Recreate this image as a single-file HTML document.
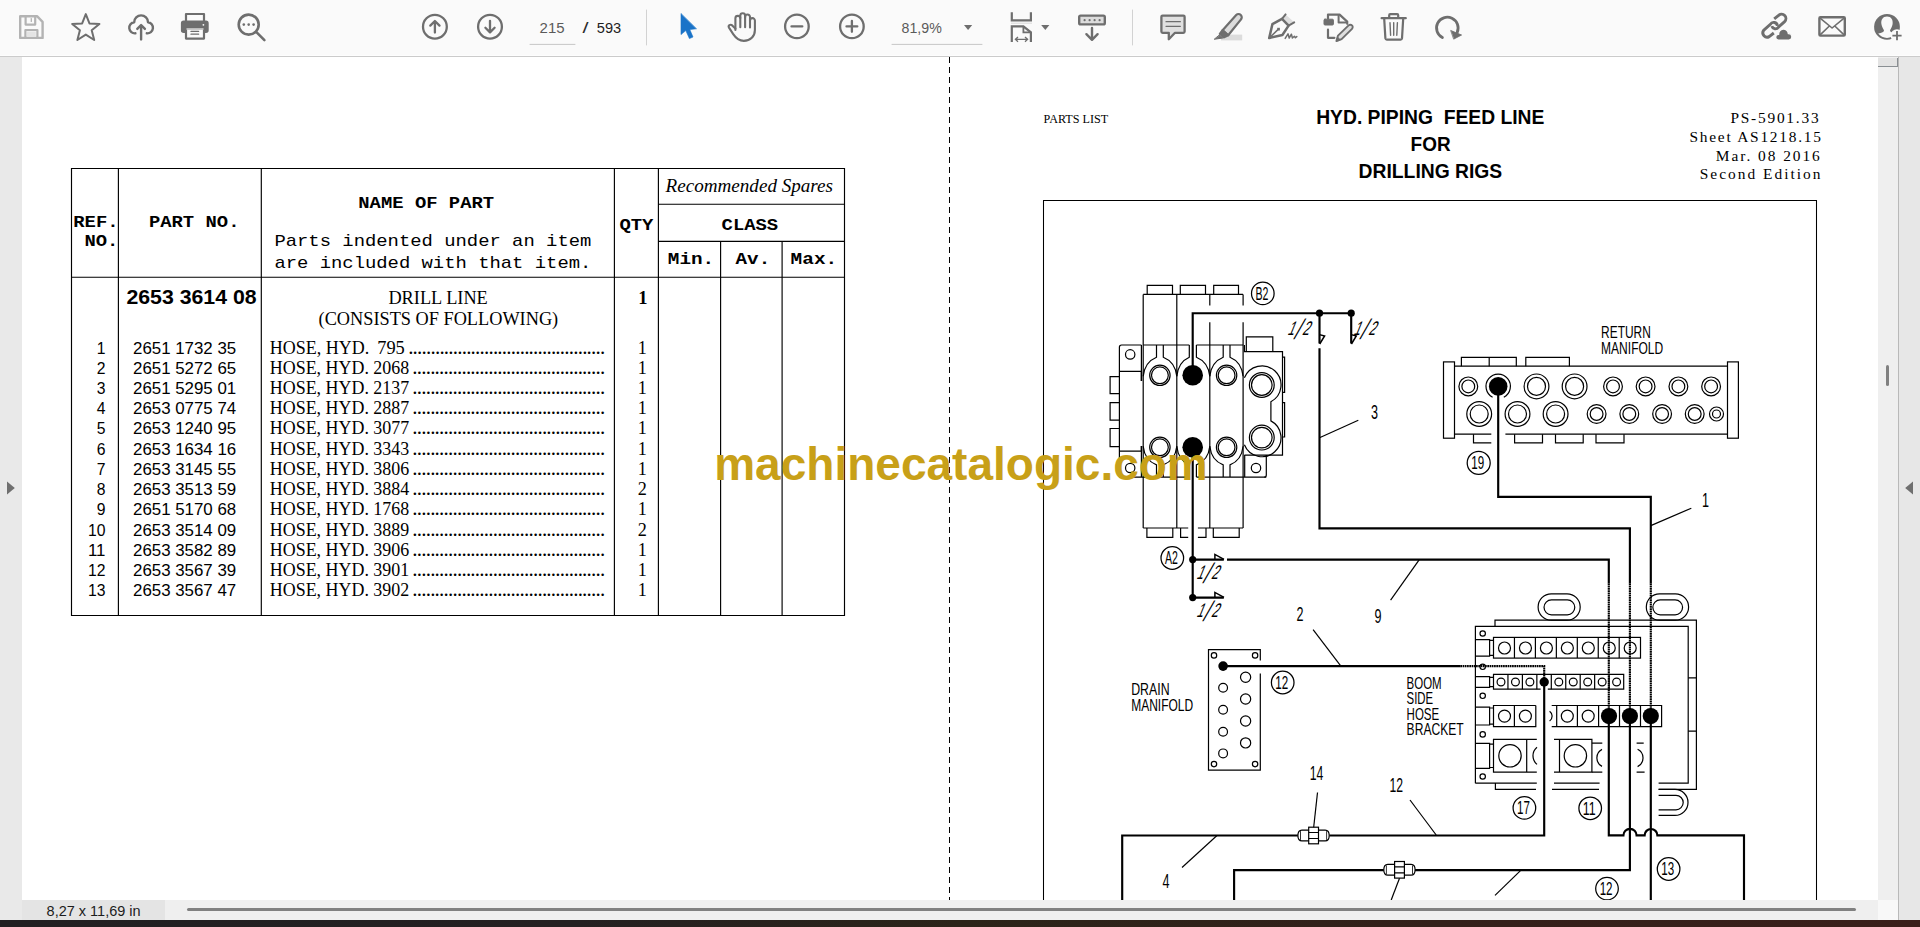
<!DOCTYPE html>
<html lang="en"><head><meta charset="utf-8">
<title>HYD. PIPING FEED LINE FOR DRILLING RIGS - Parts List</title>
<style>
html,body{margin:0;padding:0;}
body{width:1920px;height:927px;overflow:hidden;background:#fff;position:relative;
 font-family:"Liberation Sans",sans-serif;}
.abs{position:absolute;}
#toolbar{left:0;top:0;width:1920px;height:55px;background:#fafafa;border-bottom:1px solid #fdfdfd;}
#tbline{left:0;top:56px;width:1920px;height:1px;background:#cbcbcb;}
#leftstrip{left:0;top:57px;width:22px;height:863px;background:#e9e9e9;}
#page{left:22px;top:57px;width:1856px;height:843px;background:#fff;}
#vscroll{left:1878px;top:57px;width:20px;height:843px;background:#efefef;}
#vthumb{left:1878px;top:58px;width:19px;height:8px;background:#e3e3e3;border-bottom:1px solid #8a8f93;border-right:1px solid #8a8f93;}
#vmark{left:1886px;top:365px;width:3px;height:21px;background:#808080;border-radius:1.5px;}
#rline{left:1898px;top:57px;width:1px;height:863px;background:#b9b9b9;}
#rpanel{left:1899px;top:57px;width:21px;height:863px;background:#e7e7e7;}
#status{left:22px;top:900px;width:143px;height:20px;background:#e4e4e4;}
#hscroll{left:165px;top:900px;width:1713px;height:20px;background:#efefef;}
#hthumb{left:187px;top:908px;width:1669px;height:3px;background:#808080;border-radius:1.5px;}
#corner{left:1878px;top:900px;width:20px;height:20px;background:#f8f8f8;}
#taskbar{left:0;top:920px;width:1920px;height:7px;background:linear-gradient(90deg,#211f21 0%,#242021 30%,#2b2419 50%,#33201a 75%,#3a1f1a 100%);}
svg{position:absolute;left:0;top:0;overflow:visible;}
text{white-space:pre;}
</style></head><body>
<div class="abs" id="page"></div>
<svg id="doc" width="1920" height="927" viewBox="0 0 1920 927">
<g id="pages">
<g id="partslist" fill="#000" stroke="none">
<g stroke="#000" stroke-width="1.15" fill="none">
<path d="M71.5,168.5 H844.5 V615.5 H71.5 Z"/>
<path d="M118.4,168.5 V615.5 M261.3,168.5 V615.5 M614.4,168.5 V615.5 M658.4,168.5 V615.5"/>
<path d="M720.6,241.4 V615.5 M782.1,241.4 V615.5"/>
<path d="M71.5,277.2 H844.5 M658.4,204.2 H844.5 M658.4,241.4 H844.5"/>
</g>
<path d="M949.5,57 V900" stroke="#000" stroke-width="1" stroke-dasharray="6 4" fill="none"/>
<text x="73.30" y="226.90" font-family="'Liberation Mono',monospace" font-size="16.10" textLength="45.28" lengthAdjust="spacingAndGlyphs" font-weight="bold">REF.</text>
<text x="84.40" y="245.60" font-family="'Liberation Mono',monospace" font-size="16.10" textLength="33.96" lengthAdjust="spacingAndGlyphs" font-weight="bold">NO.</text>
<text x="148.90" y="226.90" font-family="'Liberation Mono',monospace" font-size="16.10" textLength="90.56" lengthAdjust="spacingAndGlyphs" font-weight="bold">PART NO.</text>
<text x="358.30" y="207.90" font-family="'Liberation Mono',monospace" font-size="16.10" textLength="135.84" lengthAdjust="spacingAndGlyphs" font-weight="bold">NAME OF PART</text>
<text x="274.40" y="246.30" font-family="'Liberation Mono',monospace" font-size="16.10" textLength="316.96" lengthAdjust="spacingAndGlyphs">Parts indented under an item</text>
<text x="274.40" y="268.30" font-family="'Liberation Mono',monospace" font-size="16.10" textLength="316.96" lengthAdjust="spacingAndGlyphs">are included with that item.</text>
<text x="619.40" y="229.80" font-family="'Liberation Mono',monospace" font-size="16.10" textLength="33.96" lengthAdjust="spacingAndGlyphs" font-weight="bold">QTY</text>
<text x="721.60" y="229.70" font-family="'Liberation Mono',monospace" font-size="16.10" textLength="56.60" lengthAdjust="spacingAndGlyphs" font-weight="bold">CLASS</text>
<text x="667.80" y="264.40" font-family="'Liberation Mono',monospace" font-size="16.10" textLength="46.40" lengthAdjust="spacingAndGlyphs" font-weight="bold">Min.</text>
<text x="735.60" y="264.40" font-family="'Liberation Mono',monospace" font-size="16.10" textLength="34.60" lengthAdjust="spacingAndGlyphs" font-weight="bold">Av.</text>
<text x="790.60" y="264.40" font-family="'Liberation Mono',monospace" font-size="16.10" textLength="46.60" lengthAdjust="spacingAndGlyphs" font-weight="bold">Max.</text>
<text x="665.60" y="191.90" font-family="'Liberation Serif',serif" font-size="19.00" textLength="167.40" lengthAdjust="spacingAndGlyphs" font-style="italic">Recommended Spares</text>
<text x="126.40" y="303.60" font-family="'Liberation Sans',sans-serif" font-size="20.90" textLength="130.20" lengthAdjust="spacingAndGlyphs" font-weight="bold">2653 3614 08</text>
<text x="388.40" y="303.50" font-family="'Liberation Serif',serif" font-size="18.20" textLength="99.40" lengthAdjust="spacingAndGlyphs">DRILL LINE</text>
<text x="318.60" y="324.50" font-family="'Liberation Serif',serif" font-size="18.20" textLength="239.60" lengthAdjust="spacingAndGlyphs">(CONSISTS OF FOLLOWING)</text>
<text x="638.20" y="303.50" font-family="'Liberation Serif',serif" font-size="18.60" textLength="9.30" lengthAdjust="spacingAndGlyphs" font-weight="bold">1</text>
<text x="105.40" y="353.60" font-family="'Liberation Sans',sans-serif" font-size="17.30" textLength="8.75" lengthAdjust="spacingAndGlyphs" text-anchor="end">1</text>
<text x="133.00" y="353.60" font-family="'Liberation Sans',sans-serif" font-size="17.30" textLength="103.20" lengthAdjust="spacingAndGlyphs">2651 1732 35</text>
<text x="269.80" y="353.60" font-family="'Liberation Serif',serif" font-size="18.20" textLength="99.40" lengthAdjust="spacingAndGlyphs">HOSE, HYD.</text>
<text x="377.20" y="353.60" font-family="'Liberation Serif',serif" font-size="18.20" textLength="27.60" lengthAdjust="spacingAndGlyphs">795</text>
<text x="408.15" y="353.60" font-family="'Liberation Serif',serif" font-size="21.00" textLength="197.08" lengthAdjust="spacing">............................................</text>
<text x="637.80" y="353.60" font-family="'Liberation Serif',serif" font-size="18.20" textLength="9.10" lengthAdjust="spacingAndGlyphs">1</text>
<text x="105.40" y="373.82" font-family="'Liberation Sans',sans-serif" font-size="17.30" textLength="8.75" lengthAdjust="spacingAndGlyphs" text-anchor="end">2</text>
<text x="133.00" y="373.82" font-family="'Liberation Sans',sans-serif" font-size="17.30" textLength="103.20" lengthAdjust="spacingAndGlyphs">2651 5272 65</text>
<text x="269.80" y="373.82" font-family="'Liberation Serif',serif" font-size="18.20" textLength="139.40" lengthAdjust="spacingAndGlyphs">HOSE, HYD. 2068</text>
<text x="412.25" y="373.82" font-family="'Liberation Serif',serif" font-size="21.00" textLength="192.99" lengthAdjust="spacing">...........................................</text>
<text x="637.80" y="373.82" font-family="'Liberation Serif',serif" font-size="18.20" textLength="9.10" lengthAdjust="spacingAndGlyphs">1</text>
<text x="105.40" y="394.04" font-family="'Liberation Sans',sans-serif" font-size="17.30" textLength="8.75" lengthAdjust="spacingAndGlyphs" text-anchor="end">3</text>
<text x="133.00" y="394.04" font-family="'Liberation Sans',sans-serif" font-size="17.30" textLength="103.20" lengthAdjust="spacingAndGlyphs">2651 5295 01</text>
<text x="269.80" y="394.04" font-family="'Liberation Serif',serif" font-size="18.20" textLength="139.40" lengthAdjust="spacingAndGlyphs">HOSE, HYD. 2137</text>
<text x="412.25" y="394.04" font-family="'Liberation Serif',serif" font-size="21.00" textLength="192.99" lengthAdjust="spacing">...........................................</text>
<text x="637.80" y="394.04" font-family="'Liberation Serif',serif" font-size="18.20" textLength="9.10" lengthAdjust="spacingAndGlyphs">1</text>
<text x="105.40" y="414.26" font-family="'Liberation Sans',sans-serif" font-size="17.30" textLength="8.75" lengthAdjust="spacingAndGlyphs" text-anchor="end">4</text>
<text x="133.00" y="414.26" font-family="'Liberation Sans',sans-serif" font-size="17.30" textLength="103.20" lengthAdjust="spacingAndGlyphs">2653 0775 74</text>
<text x="269.80" y="414.26" font-family="'Liberation Serif',serif" font-size="18.20" textLength="139.40" lengthAdjust="spacingAndGlyphs">HOSE, HYD. 2887</text>
<text x="412.25" y="414.26" font-family="'Liberation Serif',serif" font-size="21.00" textLength="192.99" lengthAdjust="spacing">...........................................</text>
<text x="637.80" y="414.26" font-family="'Liberation Serif',serif" font-size="18.20" textLength="9.10" lengthAdjust="spacingAndGlyphs">1</text>
<text x="105.40" y="434.48" font-family="'Liberation Sans',sans-serif" font-size="17.30" textLength="8.75" lengthAdjust="spacingAndGlyphs" text-anchor="end">5</text>
<text x="133.00" y="434.48" font-family="'Liberation Sans',sans-serif" font-size="17.30" textLength="103.20" lengthAdjust="spacingAndGlyphs">2653 1240 95</text>
<text x="269.80" y="434.48" font-family="'Liberation Serif',serif" font-size="18.20" textLength="139.40" lengthAdjust="spacingAndGlyphs">HOSE, HYD. 3077</text>
<text x="412.25" y="434.48" font-family="'Liberation Serif',serif" font-size="21.00" textLength="192.99" lengthAdjust="spacing">...........................................</text>
<text x="637.80" y="434.48" font-family="'Liberation Serif',serif" font-size="18.20" textLength="9.10" lengthAdjust="spacingAndGlyphs">1</text>
<text x="105.40" y="454.70" font-family="'Liberation Sans',sans-serif" font-size="17.30" textLength="8.75" lengthAdjust="spacingAndGlyphs" text-anchor="end">6</text>
<text x="133.00" y="454.70" font-family="'Liberation Sans',sans-serif" font-size="17.30" textLength="103.20" lengthAdjust="spacingAndGlyphs">2653 1634 16</text>
<text x="269.80" y="454.70" font-family="'Liberation Serif',serif" font-size="18.20" textLength="139.40" lengthAdjust="spacingAndGlyphs">HOSE, HYD. 3343</text>
<text x="412.25" y="454.70" font-family="'Liberation Serif',serif" font-size="21.00" textLength="192.99" lengthAdjust="spacing">...........................................</text>
<text x="637.80" y="454.70" font-family="'Liberation Serif',serif" font-size="18.20" textLength="9.10" lengthAdjust="spacingAndGlyphs">1</text>
<text x="105.40" y="474.92" font-family="'Liberation Sans',sans-serif" font-size="17.30" textLength="8.75" lengthAdjust="spacingAndGlyphs" text-anchor="end">7</text>
<text x="133.00" y="474.92" font-family="'Liberation Sans',sans-serif" font-size="17.30" textLength="103.20" lengthAdjust="spacingAndGlyphs">2653 3145 55</text>
<text x="269.80" y="474.92" font-family="'Liberation Serif',serif" font-size="18.20" textLength="139.40" lengthAdjust="spacingAndGlyphs">HOSE, HYD. 3806</text>
<text x="412.25" y="474.92" font-family="'Liberation Serif',serif" font-size="21.00" textLength="192.99" lengthAdjust="spacing">...........................................</text>
<text x="637.80" y="474.92" font-family="'Liberation Serif',serif" font-size="18.20" textLength="9.10" lengthAdjust="spacingAndGlyphs">1</text>
<text x="105.40" y="495.14" font-family="'Liberation Sans',sans-serif" font-size="17.30" textLength="8.75" lengthAdjust="spacingAndGlyphs" text-anchor="end">8</text>
<text x="133.00" y="495.14" font-family="'Liberation Sans',sans-serif" font-size="17.30" textLength="103.20" lengthAdjust="spacingAndGlyphs">2653 3513 59</text>
<text x="269.80" y="495.14" font-family="'Liberation Serif',serif" font-size="18.20" textLength="139.40" lengthAdjust="spacingAndGlyphs">HOSE, HYD. 3884</text>
<text x="412.25" y="495.14" font-family="'Liberation Serif',serif" font-size="21.00" textLength="192.99" lengthAdjust="spacing">...........................................</text>
<text x="637.80" y="495.14" font-family="'Liberation Serif',serif" font-size="18.20" textLength="9.10" lengthAdjust="spacingAndGlyphs">2</text>
<text x="105.40" y="515.36" font-family="'Liberation Sans',sans-serif" font-size="17.30" textLength="8.75" lengthAdjust="spacingAndGlyphs" text-anchor="end">9</text>
<text x="133.00" y="515.36" font-family="'Liberation Sans',sans-serif" font-size="17.30" textLength="103.20" lengthAdjust="spacingAndGlyphs">2651 5170 68</text>
<text x="269.80" y="515.36" font-family="'Liberation Serif',serif" font-size="18.20" textLength="139.40" lengthAdjust="spacingAndGlyphs">HOSE, HYD. 1768</text>
<text x="412.25" y="515.36" font-family="'Liberation Serif',serif" font-size="21.00" textLength="192.99" lengthAdjust="spacing">...........................................</text>
<text x="637.80" y="515.36" font-family="'Liberation Serif',serif" font-size="18.20" textLength="9.10" lengthAdjust="spacingAndGlyphs">1</text>
<text x="105.40" y="535.58" font-family="'Liberation Sans',sans-serif" font-size="17.30" textLength="17.50" lengthAdjust="spacingAndGlyphs" text-anchor="end">10</text>
<text x="133.00" y="535.58" font-family="'Liberation Sans',sans-serif" font-size="17.30" textLength="103.20" lengthAdjust="spacingAndGlyphs">2653 3514 09</text>
<text x="269.80" y="535.58" font-family="'Liberation Serif',serif" font-size="18.20" textLength="139.40" lengthAdjust="spacingAndGlyphs">HOSE, HYD. 3889</text>
<text x="412.25" y="535.58" font-family="'Liberation Serif',serif" font-size="21.00" textLength="192.99" lengthAdjust="spacing">...........................................</text>
<text x="637.80" y="535.58" font-family="'Liberation Serif',serif" font-size="18.20" textLength="9.10" lengthAdjust="spacingAndGlyphs">2</text>
<text x="105.40" y="555.80" font-family="'Liberation Sans',sans-serif" font-size="17.30" textLength="17.50" lengthAdjust="spacingAndGlyphs" text-anchor="end">11</text>
<text x="133.00" y="555.80" font-family="'Liberation Sans',sans-serif" font-size="17.30" textLength="103.20" lengthAdjust="spacingAndGlyphs">2653 3582 89</text>
<text x="269.80" y="555.80" font-family="'Liberation Serif',serif" font-size="18.20" textLength="139.40" lengthAdjust="spacingAndGlyphs">HOSE, HYD. 3906</text>
<text x="412.25" y="555.80" font-family="'Liberation Serif',serif" font-size="21.00" textLength="192.99" lengthAdjust="spacing">...........................................</text>
<text x="637.80" y="555.80" font-family="'Liberation Serif',serif" font-size="18.20" textLength="9.10" lengthAdjust="spacingAndGlyphs">1</text>
<text x="105.40" y="576.02" font-family="'Liberation Sans',sans-serif" font-size="17.30" textLength="17.50" lengthAdjust="spacingAndGlyphs" text-anchor="end">12</text>
<text x="133.00" y="576.02" font-family="'Liberation Sans',sans-serif" font-size="17.30" textLength="103.20" lengthAdjust="spacingAndGlyphs">2653 3567 39</text>
<text x="269.80" y="576.02" font-family="'Liberation Serif',serif" font-size="18.20" textLength="139.40" lengthAdjust="spacingAndGlyphs">HOSE, HYD. 3901</text>
<text x="412.25" y="576.02" font-family="'Liberation Serif',serif" font-size="21.00" textLength="192.99" lengthAdjust="spacing">...........................................</text>
<text x="637.80" y="576.02" font-family="'Liberation Serif',serif" font-size="18.20" textLength="9.10" lengthAdjust="spacingAndGlyphs">1</text>
<text x="105.40" y="596.24" font-family="'Liberation Sans',sans-serif" font-size="17.30" textLength="17.50" lengthAdjust="spacingAndGlyphs" text-anchor="end">13</text>
<text x="133.00" y="596.24" font-family="'Liberation Sans',sans-serif" font-size="17.30" textLength="103.20" lengthAdjust="spacingAndGlyphs">2653 3567 47</text>
<text x="269.80" y="596.24" font-family="'Liberation Serif',serif" font-size="18.20" textLength="139.40" lengthAdjust="spacingAndGlyphs">HOSE, HYD. 3902</text>
<text x="412.25" y="596.24" font-family="'Liberation Serif',serif" font-size="21.00" textLength="192.99" lengthAdjust="spacing">...........................................</text>
<text x="637.80" y="596.24" font-family="'Liberation Serif',serif" font-size="18.20" textLength="9.10" lengthAdjust="spacingAndGlyphs">1</text>
</g>
<g fill="#000" stroke="none">
<text x="1043.60" y="122.80" font-family="'Liberation Serif',serif" font-size="13.40" textLength="64.60" lengthAdjust="spacingAndGlyphs">PARTS LIST</text>
<text x="1316.20" y="123.70" font-family="'Liberation Sans',sans-serif" font-size="21.00" textLength="228.20" lengthAdjust="spacingAndGlyphs" font-weight="bold">HYD. PIPING  FEED LINE</text>
<text x="1410.60" y="150.60" font-family="'Liberation Sans',sans-serif" font-size="21.00" textLength="40.00" lengthAdjust="spacingAndGlyphs" font-weight="bold">FOR</text>
<text x="1358.60" y="177.60" font-family="'Liberation Sans',sans-serif" font-size="21.00" textLength="143.60" lengthAdjust="spacingAndGlyphs" font-weight="bold">DRILLING RIGS</text>
<text x="1818.60" y="122.80" font-family="'Liberation Serif',serif" font-size="15.40" textLength="88.20" lengthAdjust="spacing" text-anchor="end">PS-5901.33</text>
<text x="1821.00" y="141.90" font-family="'Liberation Serif',serif" font-size="15.40" textLength="131.60" lengthAdjust="spacing" text-anchor="end">Sheet AS1218.15</text>
<text x="1819.80" y="160.60" font-family="'Liberation Serif',serif" font-size="15.40" textLength="104.00" lengthAdjust="spacing" text-anchor="end">Mar. 08 2016</text>
<text x="1820.40" y="178.80" font-family="'Liberation Serif',serif" font-size="15.40" textLength="120.60" lengthAdjust="spacing" text-anchor="end">Second Edition</text>
</g>
<g id="diagram" fill="none" stroke="#000" stroke-width="1.2" stroke-linecap="butt" stroke-linejoin="miter">
<path d="M1043.5,900 V200.5 H1816.5 V900" stroke-width="1.05" />
<path d="M1147.2,294.4 V285.4 H1172.5 V294.4" stroke-width="1.2" />
<path d="M1180.3,294.4 V285.4 H1205.5 V294.4" stroke-width="1.2" />
<path d="M1213.7,294.4 V285.4 H1238.5 V294.4" stroke-width="1.2" />
<path d="M1143.2,294.4 H1243.1" stroke-width="1.2" />
<path d="M1143.2,294.4 V528.0 M1176.8,294.4 V528.0" stroke-width="1.2" />
<path d="M1209.8,294.4 V305.4 M1209.8,322.2 V528.0 M1243.1,294.4 V305.4 M1243.1,322.2 V528.0" stroke-width="1.2" />
<path d="M1143.2,345.0 H1189.3 M1196.4,345.0 H1243.1" stroke-width="1.2" />
<path d="M1119.4,477.1 H1189.3 M1196.4,477.1 H1266.3" stroke-width="1.2" />
<path d="M1156.5,345.0 V357.2 Q1144.7,362 1143.2,376.3 M1163.3,345.0 V357.2 Q1175.3,362 1176.8,376.3" stroke-width="1.2" />
<path d="M1156.5,477.1 V464.9 Q1144.7,460.4 1143.2,446.3 M1163.3,477.1 V464.9 Q1175.3,460.4 1176.8,446.3" stroke-width="1.2" />
<path d="M1189.3,345.0 V357.2 Q1178.3,362 1176.8,376.3 M1196.4,345.0 V357.2 Q1208.3,362 1209.8,376.3" stroke-width="1.2" />
<path d="M1189.3,477.1 V464.9 Q1178.3,460.4 1176.8,446.3 M1196.4,477.1 V464.9 Q1208.3,460.4 1209.8,446.3" stroke-width="1.2" />
<path d="M1223.2,345.0 V357.2 Q1211.3,362 1209.8,376.3 M1230.0,345.0 V357.2 Q1241.6,362 1243.1,376.3" stroke-width="1.2" />
<path d="M1223.2,477.1 V464.9 Q1211.3,460.4 1209.8,446.3 M1230.0,477.1 V464.9 Q1241.6,460.4 1243.1,446.3" stroke-width="1.2" />
<circle cx="1159.90" cy="375.30" r="10.20" />
<circle cx="1159.90" cy="375.30" r="8.40" />
<circle cx="1159.90" cy="447.30" r="10.20" />
<circle cx="1159.90" cy="447.30" r="8.40" />
<circle cx="1226.60" cy="375.30" r="10.20" />
<circle cx="1226.60" cy="375.30" r="8.40" />
<circle cx="1226.60" cy="447.30" r="10.20" />
<circle cx="1226.60" cy="447.30" r="8.40" />
<path d="M1143.2,528.0 H1188.2 M1197.9,528.0 H1243.1" stroke-width="1.2" />
<path d="M1146.9,528.0 V537.4 H1172.8 V528.0 M1180.6,528.0 V537.4 H1188.2 M1197.9,537.4 H1206 V528.0 M1213.3,528.0 V537.4 H1239.2 V528.0" stroke-width="1.2" />
<path d="M1141.4,345.0 H1121.6 Q1119.4,345.0 1119.4,347.2 V477.1" stroke-width="1.2" />
<path d="M1141.4,345.0 V371.4 H1119.4 M1119.4,451.2 H1141.4 V477.1" stroke-width="1.2" />
<path d="M1141.4,371.4 V381 M1141.4,446 V451.2" stroke-width="1.6" />
<circle cx="1130.20" cy="354.40" r="4.70" />
<circle cx="1130.20" cy="468.00" r="4.70" />
<path d="M1119.4,376.6 H1110.1 V393.6 H1119.4" stroke-width="1.2" />
<path d="M1119.4,402.7 H1110.1 V420.1 H1119.4" stroke-width="1.2" />
<path d="M1119.4,428.5 H1110.1 V446.7 H1119.4" stroke-width="1.2" />
<path d="M1246.3,351.6 V336.9 H1272.8 V351.6" stroke-width="1.2" />
<path d="M1244.4,345 V351.6 H1282.5 V455.1 H1244.4" stroke-width="1.2" />
<path d="M1282.5,357.2 H1284.6 V392.3 H1282.5 M1282.5,402.7 H1284.6 V437 H1282.5" stroke-width="1.2" />
<path d="M1244.4,377.8 A19,19 0 1 1 1270.9,401.7 V420.9 A19,19 0 1 1 1244.4,444.8" stroke-width="1.2" />
<circle cx="1261.80" cy="385.00" r="12.40" />
<circle cx="1261.80" cy="385.00" r="10.30" />
<circle cx="1261.80" cy="437.60" r="12.40" />
<circle cx="1261.80" cy="437.60" r="10.30" />
<path d="M1244.7,455.1 V477.1 M1266.3,455.1 V475 Q1266.3,477.1 1264.3,477.1" stroke-width="1.2" />
<circle cx="1256.00" cy="468.00" r="4.70" />
<rect x="1443.50" y="361.90" width="11.00" height="76.30" />
<rect x="1727.50" y="361.90" width="10.90" height="76.30" />
<path d="M1454.5,366.2 H1727.5 M1454.5,434.2 H1491.3 M1505.4,434.2 H1727.5" stroke-width="1.2" />
<path d="M1461.4,366.2 V357.4 H1516.3 V366.2 M1489.2,357.4 V366.2 M1525.8,366.2 V357.4 H1569.4 V366.2" stroke-width="1.2" />
<path d="M1473.5,434.2 V442.9 H1491.3 M1514.6,434.2 V442.9 H1542.5 V434.2 M1555.5,434.2 V442.9 H1583.2 V434.2 M1596,434.2 V442.9 H1624 V434.2" stroke-width="1.2" />
<circle cx="1468.30" cy="386.40" r="9.40" />
<circle cx="1468.30" cy="386.40" r="6.40" />
<circle cx="1536.50" cy="386.40" r="12.40" />
<circle cx="1536.50" cy="386.40" r="9.00" />
<circle cx="1574.60" cy="386.40" r="12.40" />
<circle cx="1574.60" cy="386.40" r="9.00" />
<circle cx="1613.00" cy="386.40" r="9.40" />
<circle cx="1613.00" cy="386.40" r="6.40" />
<circle cx="1645.60" cy="386.40" r="9.40" />
<circle cx="1645.60" cy="386.40" r="6.40" />
<circle cx="1678.40" cy="386.40" r="9.40" />
<circle cx="1678.40" cy="386.40" r="6.40" />
<circle cx="1711.10" cy="386.40" r="9.40" />
<circle cx="1711.10" cy="386.40" r="6.40" />
<circle cx="1479.20" cy="414.00" r="12.40" />
<circle cx="1479.20" cy="414.00" r="9.00" />
<circle cx="1517.50" cy="414.00" r="12.40" />
<circle cx="1517.50" cy="414.00" r="9.00" />
<circle cx="1555.60" cy="414.00" r="12.40" />
<circle cx="1555.60" cy="414.00" r="9.00" />
<circle cx="1596.60" cy="414.00" r="9.40" />
<circle cx="1596.60" cy="414.00" r="6.40" />
<circle cx="1629.30" cy="414.00" r="9.40" />
<circle cx="1629.30" cy="414.00" r="6.40" />
<circle cx="1662.10" cy="414.00" r="9.40" />
<circle cx="1662.10" cy="414.00" r="6.40" />
<circle cx="1694.70" cy="414.00" r="9.40" />
<circle cx="1694.70" cy="414.00" r="6.40" />
<circle cx="1716.50" cy="414.00" r="7.00" />
<circle cx="1716.50" cy="414.00" r="4.00" />
<path d="M1492.6,397.2 A12.2,12.2 0 1 1 1503.8,397.2" stroke-width="1.2" />
<path d="M1551.30,593.80 H1567.00 A13.20,13.20 0 0 1 1567.00,620.20 H1551.30 A13.20,13.20 0 0 1 1551.30,593.80 Z" stroke-width="1.2" /><path d="M1551.45,599.90 H1567.35 A7.45,7.45 0 0 1 1567.35,614.80 H1551.45 A7.45,7.45 0 0 1 1551.45,599.90 Z" stroke-width="1.2" />
<path d="M1659.50,593.80 H1675.40 A13.20,13.20 0 0 1 1675.40,620.20 H1659.50 A13.20,13.20 0 0 1 1659.50,593.80 Z" stroke-width="1.2" /><path d="M1660.25,599.90 H1675.15 A7.45,7.45 0 0 1 1675.15,614.80 H1660.25 A7.45,7.45 0 0 1 1660.25,599.90 Z" stroke-width="1.2" />
<path d="M1495,626.4 V620.2 H1696.4 V789.4 H1658.6" stroke-width="1.2" />
<path d="M1475.4,783.2 V626.4 H1688.2 V783.2 H1658.6" stroke-width="1.2" />
<path d="M1688.2,677.9 H1696.4 M1688.2,731.2 H1696.4" stroke-width="1.2" />
<path d="M1475.4,783.2 H1536.8 M1554,783.2 H1599.6 M1495.4,783.2 V789.4 H1536 M1552,789.4 H1599" stroke-width="1.2" />
<circle cx="1482.70" cy="633.50" r="2.70" />
<circle cx="1482.70" cy="666.80" r="2.70" />
<circle cx="1482.70" cy="695.80" r="2.70" />
<circle cx="1482.70" cy="734.40" r="2.70" />
<circle cx="1482.70" cy="776.50" r="2.70" />
<rect x="1493.50" y="637.40" width="147.00" height="20.70" />
<path d="M1514.45,637.4 V658.1 M1535.40,637.4 V658.1 M1556.35,637.4 V658.1 M1577.30,637.4 V658.1 M1598.25,637.4 V658.1 M1619.20,637.4 V658.1" stroke-width="1.2" />
<circle cx="1504.50" cy="648.00" r="6.00" />
<circle cx="1525.45" cy="648.00" r="6.00" />
<circle cx="1546.40" cy="648.00" r="6.00" />
<circle cx="1567.35" cy="648.00" r="6.00" />
<circle cx="1588.30" cy="648.00" r="6.00" />
<circle cx="1609.25" cy="648.00" r="6.00" />
<circle cx="1630.20" cy="648.00" r="6.00" />
<path d="M1475.4,639.6 H1489.6 V656.2 H1475.4 M1489.6,640.4 H1493.5 M1489.6,655.4 H1493.5" stroke-width="1.2" />
<path d="M1540.6,689.2 H1493.5 V674.3 H1623.7 V689.2 H1547.8" stroke-width="1.2" />
<path d="M1507.95,674.3 V689.2 M1522.40,674.3 V689.2 M1536.85,674.3 V689.2 M1551.30,674.3 V689.2 M1565.75,674.3 V689.2 M1580.20,674.3 V689.2 M1594.65,674.3 V689.2 M1609.10,674.3 V689.2" stroke-width="1.2" />
<circle cx="1501.00" cy="682.00" r="3.90" />
<circle cx="1515.45" cy="682.00" r="3.90" />
<circle cx="1529.90" cy="682.00" r="3.90" />
<circle cx="1558.80" cy="682.00" r="3.90" />
<circle cx="1573.25" cy="682.00" r="3.90" />
<circle cx="1587.70" cy="682.00" r="3.90" />
<circle cx="1602.15" cy="682.00" r="3.90" />
<circle cx="1616.60" cy="682.00" r="3.90" />
<path d="M1475.4,676.7 H1489.6 V687.3 H1475.4 M1489.6,677.4 H1493.5 M1489.6,686.6 H1493.5" stroke-width="1.2" />
<path d="M1535.8,705.5 H1493.5 V726.6 H1535.8 V705.5 M1514.4,705.5 V726.6" stroke-width="1.2" />
<circle cx="1504.50" cy="716.10" r="6.00" />
<circle cx="1525.40" cy="716.10" r="6.00" />
<path d="M1551.7,705.5 H1661.6 V726.6 H1551.7 M1556.7,705.5 V726.6 M1577.4,705.5 V726.6 M1598.6,705.5 V726.6 M1619.5,705.5 V726.6 M1640.5,705.5 V726.6" stroke-width="1.2" />
<path d="M1549.6,711.2 A6,6 0 0 1 1549.6,721" stroke-width="1.2" />
<circle cx="1567.30" cy="716.10" r="6.00" />
<circle cx="1588.20" cy="716.10" r="6.00" />
<path d="M1475.4,707.2 H1489.6 V725 H1475.4 M1489.6,708 H1493.5 M1489.6,724.2 H1493.5" stroke-width="1.2" />
<path d="M1536.8,739.4 H1493.5 V772.2 H1536.8 M1526.7,739.4 V772.2" stroke-width="1.2" />
<circle cx="1510.00" cy="755.80" r="11.20" />
<path d="M1537,747.2 A11.2,11.2 0 0 0 1537,764.4" stroke-width="1.2" />
<path d="M1554,739.4 H1591.9 V772.2 H1554 M1559.5,739.4 V772.2" stroke-width="1.2" />
<circle cx="1575.40" cy="755.80" r="11.20" />
<path d="M1591.9,743.1 H1602.3 M1591.9,772.2 H1602.3 M1602,749.4 A9.6,9.6 0 0 0 1602,766.4" stroke-width="1.2" />
<path d="M1636.6,743.1 H1643.7 M1636.6,772.2 H1644.6 M1637.6,749.3 A9.6,9.6 0 0 1 1637.6,766.6" stroke-width="1.2" />
<path d="M1475.4,743.3 H1489.6 V768.3 H1475.4 M1489.6,744.1 H1493.5 M1489.6,767.5 H1493.5" stroke-width="1.2" />
<path d="M1658.6,789.4 H1675 A13,13 0 0 1 1675,815.4 H1658.6 M1658.6,795.4 H1676 A7.2,7.2 0 0 1 1676,809.8 H1658.6" stroke-width="1.2" />
<path d="M1260.3,660.6 V649.7 H1208.5 V770.2 H1260.3 V673.5" stroke-width="1.2" />
<circle cx="1214.00" cy="655.40" r="2.70" />
<circle cx="1214.00" cy="764.10" r="2.70" />
<circle cx="1255.10" cy="655.40" r="2.70" />
<circle cx="1255.10" cy="764.10" r="2.70" />
<circle cx="1223.10" cy="687.80" r="4.40" />
<circle cx="1223.10" cy="709.70" r="4.40" />
<circle cx="1223.10" cy="731.70" r="4.40" />
<circle cx="1223.10" cy="753.40" r="4.40" />
<circle cx="1245.60" cy="677.30" r="5.10" />
<circle cx="1245.60" cy="699.00" r="5.10" />
<circle cx="1245.60" cy="721.00" r="5.10" />
<circle cx="1245.60" cy="742.90" r="5.10" />
<g stroke-width="2.15" stroke-linejoin="miter" stroke-linecap="butt">
<path d="M1192.7,375.3 V313.2 H1351.2"/>
<path d="M1319.5,313.2 V343.6 M1351.2,313.2 V343.6"/>
<path d="M1192.7,447.3 V597.6 H1223.8 M1192.7,559.6 H1223.8"/>
<path d="M1227,559.6 H1608.8 V583.6 M1608.8,716.1 V835.4 H1623.4 A6.6,6.6 0 0 1 1636.6,835.4 H1644.6 A6.4,6.4 0 0 1 1657.4,835.4 H1744 V900"/>
<path d="M1319.5,348.3 V528.3 H1629.9 V583.6 M1629.9,716.1 V870.1 H1415 M1383.9,870.1 H1234.1 V900"/>
<path d="M1498.2,386.4 V496.8 H1650.8 V583.6 M1650.8,716.1 V900"/>
<path d="M1223.1,666.1 H1460.3 M1544.2,682 V835.5 H1329.3"/>
<path d="M1297.9,835.5 H1122.2 V900"/>
</g>
<g stroke-width="2.15" stroke-dasharray="1.7 0.55" stroke-linecap="butt">
<path d="M1608.8,583.6 V716 M1629.9,583.6 V716 M1650.8,583.6 V716"/>
<path d="M1460.3,666.1 H1544.2 V682"/>
</g>
<path d="M1319.5,334.6 L1324.6,336 L1319.7,344 M1351.2,334.6 L1356.3,336 L1351.4,344" stroke-width="1.5" />
<path d="M1214.9,559.6 V554.4 L1224,559.4 M1214.9,597.6 V592.4 L1224,597.4" stroke-width="1.5" />
<circle cx="1192.70" cy="375.30" r="10.30" fill="#000" stroke="none"/>
<circle cx="1192.70" cy="447.30" r="10.30" fill="#000" stroke="none"/>
<circle cx="1319.50" cy="313.20" r="3.60" fill="#000" stroke="none"/>
<circle cx="1351.20" cy="313.20" r="3.60" fill="#000" stroke="none"/>
<circle cx="1192.70" cy="559.60" r="3.60" fill="#000" stroke="none"/>
<circle cx="1192.70" cy="597.60" r="3.60" fill="#000" stroke="none"/>
<circle cx="1498.20" cy="386.40" r="9.30" fill="#000" stroke="none"/>
<circle cx="1223.10" cy="666.10" r="4.80" fill="#000" stroke="none"/>
<circle cx="1544.20" cy="682.00" r="4.70" fill="#000" stroke="none"/>
<circle cx="1609.00" cy="716.10" r="8.10" fill="#000" stroke="none"/>
<circle cx="1629.90" cy="716.10" r="8.10" fill="#000" stroke="none"/>
<circle cx="1650.80" cy="716.10" r="8.10" fill="#000" stroke="none"/>
<path d="M1301.9,830.1 H1325.2 Q1329.2,830.1 1329.2,835.5 Q1329.2,840.9 1325.2,840.9 H1301.9 Q1297.9,840.9 1297.9,835.5 Q1297.9,830.1 1301.9,830.1 Z" fill="#fff" stroke-width="1.2"/>
<path d="M1300.5,831.1 V839.9 M1326.6,831.1 V839.9" stroke-width="0.8" />
<rect x="1308.70" y="827.20" width="9.80" height="16.60" fill="#fff"/>
<path d="M1308.7,832.5 H1318.5 M1308.7,838.5 H1318.5" stroke-width="1.2" />
<path d="M1387.8,864.4 H1411.1 Q1415.1,864.4 1415.1,869.8 Q1415.1,875.2 1411.1,875.2 H1387.8 Q1383.8,875.2 1383.8,869.8 Q1383.8,864.4 1387.8,864.4 Z" fill="#fff" stroke-width="1.2"/>
<path d="M1386.4,865.4 V874.2 M1412.5,865.4 V874.2" stroke-width="0.8" />
<rect x="1394.60" y="861.50" width="9.80" height="16.60" fill="#fff"/>
<path d="M1394.6,866.8 H1404.4 M1394.6,872.8 H1404.4" stroke-width="1.2" />
<path d="M1319.5,437.7 L1358.3,420.2" stroke-width="1.2" />
<path d="M1650.8,525.6 L1691.3,508.2" stroke-width="1.2" />
<path d="M1419.3,559.6 L1390.6,600.2" stroke-width="1.2" />
<path d="M1340.7,665.8 L1313.1,629.7" stroke-width="1.2" />
<path d="M1217,835.5 L1182,867.5" stroke-width="1.2" />
<path d="M1313.7,827.2 L1317.5,792.5" stroke-width="1.2" />
<path d="M1436.2,835 L1410,800" stroke-width="1.2" />
<path d="M1399.5,878.3 L1391.2,900" stroke-width="1.2" />
<path d="M1521,870.1 L1495,895.4" stroke-width="1.2" />
<text x="1370.90" y="418.80" font-family="'Liberation Sans',sans-serif" font-size="19.48" textLength="7.00" lengthAdjust="spacingAndGlyphs" fill="#000" stroke="none">3</text>
<text x="1702.10" y="507.40" font-family="'Liberation Sans',sans-serif" font-size="19.48" textLength="7.00" lengthAdjust="spacingAndGlyphs" fill="#000" stroke="none">1</text>
<text x="1296.40" y="621.40" font-family="'Liberation Sans',sans-serif" font-size="19.48" textLength="7.00" lengthAdjust="spacingAndGlyphs" fill="#000" stroke="none">2</text>
<text x="1374.40" y="622.80" font-family="'Liberation Sans',sans-serif" font-size="19.48" textLength="7.00" lengthAdjust="spacingAndGlyphs" fill="#000" stroke="none">9</text>
<text x="1162.50" y="887.60" font-family="'Liberation Sans',sans-serif" font-size="19.48" textLength="7.00" lengthAdjust="spacingAndGlyphs" fill="#000" stroke="none">4</text>
<text x="1309.70" y="780.40" font-family="'Liberation Sans',sans-serif" font-size="19.48" textLength="13.60" lengthAdjust="spacingAndGlyphs" fill="#000" stroke="none">14</text>
<text x="1389.40" y="791.80" font-family="'Liberation Sans',sans-serif" font-size="19.48" textLength="13.60" lengthAdjust="spacingAndGlyphs" fill="#000" stroke="none">12</text>
<text transform="translate(1289.8,334.7) skewX(-22)" font-family="'Liberation Sans',sans-serif" font-size="19.6" fill="#000" stroke="none"><tspan x="-2.9" y="0" textLength="6.6" lengthAdjust="spacingAndGlyphs">1</tspan><tspan x="5" y="4" font-size="28.4" textLength="4.8" lengthAdjust="spacingAndGlyphs">/</tspan><tspan x="12" y="0" textLength="6.8" lengthAdjust="spacingAndGlyphs">2</tspan></text>
<text transform="translate(1356.0,334.7) skewX(-22)" font-family="'Liberation Sans',sans-serif" font-size="19.6" fill="#000" stroke="none"><tspan x="-2.9" y="0" textLength="6.6" lengthAdjust="spacingAndGlyphs">1</tspan><tspan x="5" y="4" font-size="28.4" textLength="4.8" lengthAdjust="spacingAndGlyphs">/</tspan><tspan x="12" y="0" textLength="6.8" lengthAdjust="spacingAndGlyphs">2</tspan></text>
<text transform="translate(1198.8,579.4) skewX(-22)" font-family="'Liberation Sans',sans-serif" font-size="19.6" fill="#000" stroke="none"><tspan x="-2.9" y="0" textLength="6.6" lengthAdjust="spacingAndGlyphs">1</tspan><tspan x="5" y="4" font-size="28.4" textLength="4.8" lengthAdjust="spacingAndGlyphs">/</tspan><tspan x="12" y="0" textLength="6.8" lengthAdjust="spacingAndGlyphs">2</tspan></text>
<text transform="translate(1198.8,617.4) skewX(-22)" font-family="'Liberation Sans',sans-serif" font-size="19.6" fill="#000" stroke="none"><tspan x="-2.9" y="0" textLength="6.6" lengthAdjust="spacingAndGlyphs">1</tspan><tspan x="5" y="4" font-size="28.4" textLength="4.8" lengthAdjust="spacingAndGlyphs">/</tspan><tspan x="12" y="0" textLength="6.8" lengthAdjust="spacingAndGlyphs">2</tspan></text>
<circle cx="1262.80" cy="293.40" r="11.30" stroke-width="1.25"/><text x="1261.90" y="299.80" font-family="'Liberation Sans',sans-serif" font-size="17.60" textLength="12.90" lengthAdjust="spacingAndGlyphs" text-anchor="middle" fill="#000" stroke="none">B2</text>
<circle cx="1172.30" cy="558.00" r="11.30" stroke-width="1.25"/><text x="1171.40" y="564.40" font-family="'Liberation Sans',sans-serif" font-size="17.60" textLength="12.90" lengthAdjust="spacingAndGlyphs" text-anchor="middle" fill="#000" stroke="none">A2</text>
<circle cx="1478.70" cy="462.90" r="11.50" stroke-width="1.25"/><text x="1477.80" y="469.30" font-family="'Liberation Sans',sans-serif" font-size="17.60" textLength="12.90" lengthAdjust="spacingAndGlyphs" text-anchor="middle" fill="#000" stroke="none">19</text>
<circle cx="1282.70" cy="682.50" r="11.30" stroke-width="1.25"/><text x="1281.80" y="688.90" font-family="'Liberation Sans',sans-serif" font-size="17.60" textLength="12.90" lengthAdjust="spacingAndGlyphs" text-anchor="middle" fill="#000" stroke="none">12</text>
<circle cx="1524.40" cy="807.90" r="11.30" stroke-width="1.25"/><text x="1523.50" y="814.30" font-family="'Liberation Sans',sans-serif" font-size="17.60" textLength="12.90" lengthAdjust="spacingAndGlyphs" text-anchor="middle" fill="#000" stroke="none">17</text>
<circle cx="1590.20" cy="808.30" r="11.30" stroke-width="1.25"/><text x="1589.30" y="814.70" font-family="'Liberation Sans',sans-serif" font-size="17.60" textLength="12.90" lengthAdjust="spacingAndGlyphs" text-anchor="middle" fill="#000" stroke="none">11</text>
<circle cx="1668.60" cy="869.00" r="11.30" stroke-width="1.25"/><text x="1667.70" y="875.40" font-family="'Liberation Sans',sans-serif" font-size="17.60" textLength="12.90" lengthAdjust="spacingAndGlyphs" text-anchor="middle" fill="#000" stroke="none">13</text>
<circle cx="1607.00" cy="888.60" r="11.30" stroke-width="1.25"/><text x="1606.10" y="895.00" font-family="'Liberation Sans',sans-serif" font-size="17.60" textLength="12.90" lengthAdjust="spacingAndGlyphs" text-anchor="middle" fill="#000" stroke="none">12</text>
<text x="1601.10" y="337.80" font-family="'Liberation Sans',sans-serif" font-size="15.90" textLength="49.70" lengthAdjust="spacingAndGlyphs" fill="#000" stroke="none">RETURN</text>
<text x="1601.10" y="353.60" font-family="'Liberation Sans',sans-serif" font-size="15.90" textLength="62.10" lengthAdjust="spacingAndGlyphs" fill="#000" stroke="none">MANIFOLD</text>
<text x="1131.20" y="695.40" font-family="'Liberation Sans',sans-serif" font-size="15.90" textLength="38.40" lengthAdjust="spacingAndGlyphs" fill="#000" stroke="none">DRAIN</text>
<text x="1131.20" y="711.10" font-family="'Liberation Sans',sans-serif" font-size="15.90" textLength="62.00" lengthAdjust="spacingAndGlyphs" fill="#000" stroke="none">MANIFOLD</text>
<text x="1406.60" y="688.60" font-family="'Liberation Sans',sans-serif" font-size="15.90" textLength="35.10" lengthAdjust="spacingAndGlyphs" fill="#000" stroke="none">BOOM</text>
<text x="1406.60" y="704.00" font-family="'Liberation Sans',sans-serif" font-size="15.90" textLength="26.50" lengthAdjust="spacingAndGlyphs" fill="#000" stroke="none">SIDE</text>
<text x="1406.60" y="719.50" font-family="'Liberation Sans',sans-serif" font-size="15.90" textLength="32.60" lengthAdjust="spacingAndGlyphs" fill="#000" stroke="none">HOSE</text>
<text x="1406.60" y="735.30" font-family="'Liberation Sans',sans-serif" font-size="15.90" textLength="57.10" lengthAdjust="spacingAndGlyphs" fill="#000" stroke="none">BRACKET</text>
</g>
<text x="714.20" y="479.80" font-family="'Liberation Sans',sans-serif" font-size="46.00" textLength="493.60" lengthAdjust="spacingAndGlyphs" font-weight="bold" fill="#c8a018">machinecatalogic.com</text>
</g></svg>
<div class="abs" id="toolbar"></div><div class="abs" id="tbline"></div>
<div class="abs" id="leftstrip"></div>
<div class="abs" id="vscroll"></div><div class="abs" id="vthumb"></div><div class="abs" id="vmark"></div>
<div class="abs" id="rline"></div><div class="abs" id="rpanel"></div>
<div class="abs" id="status"></div><div class="abs" id="hscroll"></div><div class="abs" id="hthumb"></div>
<div class="abs" id="corner"></div><div class="abs" id="taskbar"></div>
<svg id="chrome" width="1920" height="927" viewBox="0 0 1920 927" fill="none" stroke-linecap="round" stroke-linejoin="round">
<g stroke="#b3b3b3" stroke-width="2.4"><path d="M20.2,16.2 H37 L42.6,21.8 V37.9 H20.2 Z"/><path d="M25.6,16.5 V24.6 H35.2 V16.5" stroke-width="2.2"/><path d="M25.4,37.5 V30 H37.4 V37.5" stroke-width="2.2"/><rect x="27" y="31.4" width="8.8" height="5.6" fill="#e4e4e4" stroke="none"/><path d="M31.3,18.6 V21.4" stroke-width="1.3"/></g>
<polygon points="85.80,14.10 89.44,23.38 99.40,23.98 91.70,30.32 94.21,39.97 85.80,34.60 77.39,39.97 79.90,30.32 72.20,23.98 82.16,23.38" stroke="#6e6e6e" stroke-width="2" stroke-linejoin="round"/>
<g stroke="#6e6e6e" stroke-width="2.4"><path d="M135.4,33.3 A5.5,5.5 0 1 1 134.2,22.3 A6.9,6.9 0 0 1 148,22.3 A5.5,5.5 0 1 1 146.8,33.3"/><path d="M141.1,39.4 V25.6 M137.3,28.9 L141.1,25 L144.9,28.9"/></g>
<g stroke="#6e6e6e" stroke-width="2.2"><path d="M186,21 V14 H204 V21" /><rect x="182" y="21.6" width="25.6" height="10.2" rx="1.6" fill="#6e6e6e"/><rect x="186" y="28.4" width="18" height="10.2" fill="#fafafa"/><path d="M191,31.4 H198.6 M191,34.2 H198.6" stroke-width="1.3"/></g><rect x="186.5" y="28.2" width="17" height="1.6" fill="#cfcfcf"/><circle cx="203.4" cy="24.8" r="0.9" fill="#fafafa"/>
<g stroke="#6e6e6e" stroke-width="2.6"><circle cx="248.7" cy="24.6" r="10"/><path d="M256.4,32.2 L264.4,40.2"/></g><g fill="#6e6e6e"><circle cx="243.8" cy="24.6" r="1.3"/><circle cx="248.7" cy="24.6" r="1.3"/><circle cx="253.6" cy="24.6" r="1.3"/></g>
<g stroke="#6e6e6e" stroke-width="2.3"><circle cx="434.9" cy="26.7" r="11.9"/>
<path d="M434.9,32.6 V21.2 M430.29999999999995,25.6 L434.9,21 L439.5,25.6"/></g>
<g stroke="#6e6e6e" stroke-width="2.3"><circle cx="490.0" cy="26.7" r="11.9"/>
<path d="M490.0,20.8 V32.2 M485.4,27.8 L490.0,32.4 L494.6,27.8"/></g>
<g font-family="'Liberation Sans',sans-serif" font-size="15.4" stroke="none"><text x="539.6" y="32.9" fill="#5a5a5a" textLength="25" lengthAdjust="spacingAndGlyphs">215</text><text x="582.4" y="32.9" fill="#2b2b2b" textLength="6" lengthAdjust="spacingAndGlyphs">/</text><text x="596.8" y="32.9" fill="#1e1e1e" textLength="24.4" lengthAdjust="spacingAndGlyphs">593</text><text x="901.6" y="32.9" fill="#5a5a5a" textLength="40.2" lengthAdjust="spacingAndGlyphs">81,9%</text></g>
<path d="M530,44.4 H575 M892,44.4 H982" stroke="#c6c6c6" stroke-width="1"/>
<path d="M646.5,10 V45 M1132.5,10 V45" stroke="#d2d2d2" stroke-width="1"/>
<path d="M681,13.8 L681,34.6 L685.8,30.6 L689.4,38.6 L693,37 L689.8,29.6 L696.2,28.8 Z" fill="#1a73c8" stroke="#1a73c8" stroke-width="0.6"/>
<g stroke="#6e6e6e" stroke-width="2.1"><path d="M735.4,30 V18.3 A2.45,2.45 0 0 1 740.3,18.3 V27.2"/><path d="M740.3,18 V15.7 A2.4,2.4 0 0 1 745.1,15.7 V27.2"/><path d="M745.1,17.4 V16.9 A2.45,2.45 0 0 1 750,16.9 V27.4"/><path d="M750,21 V20.6 A2.45,2.45 0 0 1 754.9,20.6 V30 C754.9,36.4 750.4,40.9 743.8,40.9 C738.6,40.9 735.6,37.8 733.2,34.2 L729,27.6 C727.8,25.6 730.4,23.8 732.2,25.4 L735.4,28.6"/></g>
<g stroke="#6e6e6e" stroke-width="2.3"><circle cx="796.9" cy="26.4" r="11.8"/><path d="M791.5,26.4 H802.3"/></g>
<g stroke="#6e6e6e" stroke-width="2.3"><circle cx="851.9" cy="26.4" r="11.8"/><path d="M846.5,26.4 H857.3 M851.9,21 V31.8"/></g>
<g fill="#6e6e6e" stroke="none"><path d="M964,25 H972.2 L968.1,30 Z"/><path d="M1041.2,25 H1049.4 L1045.3,30 Z"/></g>
<g stroke="#6e6e6e" stroke-width="2.2" stroke-linecap="butt" stroke-linejoin="miter"><path d="M1011.8,12.2 V20.4 H1030.9 V12.2"/><path d="M1011.8,42 V26.4 H1023.4 L1030.9,32.4 V42"/><path d="M1023.4,26.4 V32.4 H1030.9" stroke-width="1.8"/><path d="M1015.6,39.3 H1027.4 M1018,36.9 L1015.4,39.3 L1018,41.7 M1025,36.9 L1027.6,39.3 L1025,41.7" stroke-width="1.3"/></g><rect x="1011" y="22.6" width="21" height="1.2" fill="#dedede"/>
<g stroke="#6e6e6e" stroke-width="2.4"><rect x="1079.2" y="15.6" width="25.6" height="8.8" rx="1.4" fill="#dcdcdc"/><path d="M1092,28 V39.4 M1086.4,34.2 L1092,39.8 L1097.6,34.2"/></g><g fill="#6e6e6e"><circle cx="1084.6" cy="20.2" r="1.1"/><circle cx="1089.6" cy="20.2" r="1.1"/><circle cx="1094.6" cy="20.2" r="1.1"/><circle cx="1099.6" cy="20.2" r="1.1"/></g>
<g stroke="#6e6e6e" stroke-width="2.3"><path d="M1162.6,15.6 H1183.4 A1.2,1.2 0 0 1 1184.6,16.8 V31.6 A1.2,1.2 0 0 1 1183.4,32.8 H1175 L1168.8,39.2 V32.8 H1162.6 A1.2,1.2 0 0 1 1161.4,31.6 V16.8 A1.2,1.2 0 0 1 1162.6,15.6 Z" fill="#e0e0e0"/><path d="M1166,21.7 H1180.4 M1166,26.3 H1180.4" stroke-width="1.2"/></g>
<rect x="1221" y="34.6" width="21.2" height="5.8" fill="#dcdcdc"/><g stroke="#6e6e6e" stroke-width="2.2"><path d="M1222.6,30.2 L1236.2,15 A3.2,3.2 0 0 1 1240.8,19.6 L1228.2,35.2 Z" fill="#dcdcdc"/><path d="M1222.6,30.2 L1228.2,35.2 L1224,37.4 L1219.8,34 Z" fill="#6e6e6e"/><path d="M1219.4,35.4 L1222.8,38 L1214.6,39.2 Z" fill="#6e6e6e" stroke-width="1"/></g>
<g stroke="#6e6e6e" stroke-width="2.5"><path d="M1282.6,17.8 L1285.6,14.4 L1294.2,22.2 L1289.2,25 Z" fill="#dedede" stroke="none"/><path d="M1282,18.8 L1285.6,14.4 M1288.6,25.6 L1294.2,22.4" stroke-width="2"/><path d="M1282,18.8 L1272.4,24.2 L1269.2,38 L1282.4,35 L1288.6,25.6 Z"/><path d="M1269.8,37.4 L1278.2,29.4" stroke-width="1.5"/><rect x="1277.2" y="27.8" width="2.7" height="2.7" fill="#6e6e6e" stroke="none"/><path d="M1285.2,38.4 L1288,33.8 L1289.2,38 L1291.4,34.2 L1292.4,38 L1294.4,36.2 L1295.4,37.8 L1296.8,36.6" stroke-width="1.5"/></g>
<g stroke="#6e6e6e" stroke-width="2.2"><path d="M1328,18.6 V14.6 H1339.6 L1347.2,21.6 V23.8"/><path d="M1338.6,15.6 V22.4 H1346" stroke-width="2"/><rect x="1324" y="19.2" width="9.4" height="5.8" rx="1" fill="#6e6e6e" stroke-width="1"/><path d="M1328,29.6 V37.8 H1334.4"/><path d="M1336.4,41 L1338,35.6 L1348.6,25.4 A2.4,2.4 0 0 1 1352,28.8 L1341.6,39.2 Z" fill="#dedede" stroke-width="1.9"/><path d="M1336.4,41 L1337.6,37 L1340.2,39.8 Z" fill="#6e6e6e" stroke-width="0.6"/></g>
<g stroke="#6e6e6e" stroke-width="2.2"><path d="M1381.6,18.2 H1405.8"/><path d="M1389.2,17.6 V15.2 A1,1 0 0 1 1390.2,14.2 H1397.2 A1,1 0 0 1 1398.2,15.2 V17.6"/><path d="M1384.2,18.6 L1385.4,38.4 A1.4,1.4 0 0 0 1386.8,39.6 H1400.6 A1.4,1.4 0 0 0 1402,38.4 L1403.2,18.6"/><path d="M1390,22.6 L1390.6,35.2 M1393.7,22.6 V35.2 M1397.4,22.6 L1396.8,35.2" stroke-width="1.4"/></g>
<path d="M1442.4,37.6 A10.8,10.8 0 1 1 1457.2,32.4" stroke="#6e6e6e" stroke-width="2.8"/><path d="M1451,30.6 L1461.6,35 L1454,39 Z" fill="#6e6e6e" stroke="#6e6e6e" stroke-width="0.8"/>
<g stroke="#6e6e6e" stroke-width="2.9" stroke-linecap="butt"><path d="M1774.2,18.9 L1778.6,15.4 A4.3,4.3 0 0 1 1784.6,21.6 L1778.4,27.2 A3.7,3.7 0 0 1 1771.8,26.2"/><path d="M1773.8,33 L1769.2,36.6 A4.3,4.3 0 0 1 1763.6,30.4 L1770.4,24.2 A3.8,3.8 0 0 1 1777.4,25.8"/></g><path d="M1778.4,40.2 A2.9,2.9 0 0 1 1778.6,34.4 A4.6,4.6 0 0 1 1788.4,33.6 A3.3,3.3 0 0 1 1788.8,40.2 Z" fill="#6e6e6e" stroke="#fafafa" stroke-width="1.4"/>
<g stroke="#6e6e6e" stroke-width="2.4"><rect x="1819.4" y="17.2" width="25.4" height="18.4" rx="1"/><path d="M1820.4,18.4 L1832.1,28 L1843.8,18.4 M1820.4,34.6 L1829.4,26 M1843.8,34.6 L1834.8,26" stroke-width="1.6"/></g>
<circle cx="1887" cy="26.9" r="12.9" fill="#6e6e6e" stroke="none"/><path d="M1887,16.6 C1891.2,16.6 1893.2,20 1892.6,24 C1892.2,27 1890.6,29 1890,30.2 C1890,32.2 1892,32.6 1895.8,33.6 A11,11 0 0 1 1878.2,33.6 C1882,32.6 1884,32.2 1884,30.2 C1883.4,29 1881.8,27 1881.4,24 C1880.8,20 1882.8,16.6 1887,16.6 Z" fill="#fafafa" stroke="none"/><circle cx="1897" cy="35.6" r="6.4" fill="#fafafa" stroke="none"/><path d="M1892.4,35.6 H1901.6 M1897,31 V40.2" stroke="#6e6e6e" stroke-width="1.8" stroke-linecap="butt"/>
<path d="M7,481.6 V494.6 L14.8,488.1 Z" fill="#6f6f6f" stroke="none"/>
<path d="M1913,481.6 V494.6 L1905.2,488.1 Z" fill="#6f6f6f" stroke="none"/>
<text x="46.6" y="916" font-family="'Liberation Sans',sans-serif" font-size="15.1" fill="#1c1c1c" stroke="none" textLength="94" lengthAdjust="spacingAndGlyphs">8,27 x 11,69 in</text>
</svg>
</body></html>
